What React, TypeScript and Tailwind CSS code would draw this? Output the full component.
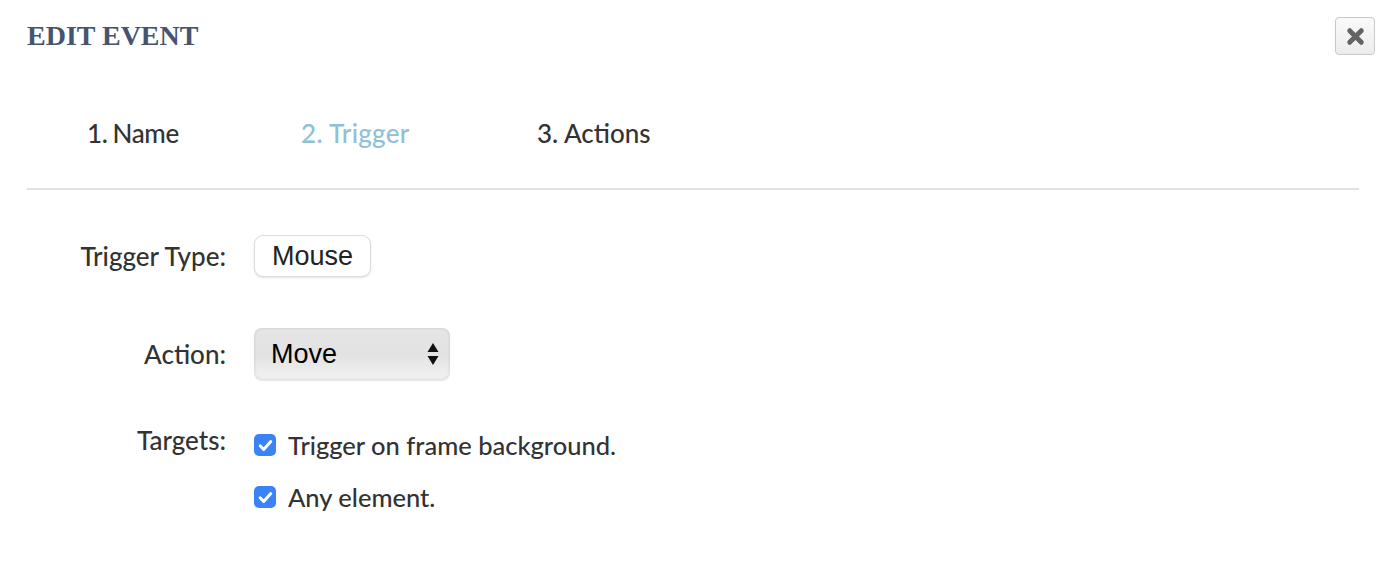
import React from "react";

const sans = { fontFamily: 'Lato, "Open Sans", sans-serif' };
const helv = { fontFamily: '"Liberation Sans", Arial, sans-serif' };

const Check = () => (
  <span className="w-[22px] h-[22px] rounded-[5px] bg-[#3b82f6] flex items-center justify-center shrink-0">
    <svg width="17" height="17" viewBox="0 0 16 16" fill="none">
      <path d="M3 8.3l3.3 3.4L13 4.3" stroke="#fff" strokeWidth="2.8" strokeLinecap="round" strokeLinejoin="round" />
    </svg>
  </span>
);

export default function App() {
  return (
    <div className="w-[1386px] h-[570px] bg-white relative text-[#333]" style={sans}>
      {/* header */}
      <div className="flex items-start justify-between pl-[27px] pr-[11px] pt-[17px]">
        <h1
          className="text-[28px] font-bold text-[#47546f] leading-none mt-[5px]"
          style={{ fontFamily: '"Liberation Serif", "Times New Roman", serif' }}
        >
          EDIT EVENT
        </h1>
        <button className="w-[40px] h-[38px] rounded-[4px] border border-[#c9c9c9] bg-gradient-to-b from-[#fafafa] to-[#ececec] flex items-center justify-center">
          <svg width="19" height="19" viewBox="0 0 18 18">
            <path d="M3.5 3.5l11 11M14.5 3.5l-11 11" stroke="#636363" strokeWidth="4.6" strokeLinecap="round" />
          </svg>
        </button>
      </div>

      {/* tabs */}
      <div className="mx-[27px] mt-[55px] border-b-2 border-[#e2e2e2] h-[80px] flex items-start pl-[60px] text-[26px] font-medium leading-none">
        <span className="w-[214px] mt-[10px] tracking-[-0.4px] [word-spacing:-1px]">1. Name</span>
        <span className="w-[236px] mt-[10px] text-[#8fc1d5] tracking-[0.3px]">2. Trigger</span>
        <span className="mt-[10px]">3. Actions</span>
      </div>

      {/* form */}
      <div className="pt-[45px] text-[26px] font-medium">
        <div className="flex items-center h-[42px]">
          <div className="w-[227px] text-right pr-[1px]">Trigger Type:</div>
          <div className="ml-[27px] h-[42px] w-[117px] rounded-[9px] border border-[#dcdcdc] bg-white shadow-[0_1px_2px_rgba(0,0,0,0.12)] flex items-center justify-center">
            <span className="text-[27px] font-normal text-[#222] leading-none" style={helv}>
              Mouse
            </span>
          </div>
        </div>

        <div className="flex items-center h-[52px] mt-[51px]">
          <div className="w-[227px] text-right pr-[1px]">Action:</div>
          <div className="ml-[27px] h-[52px] w-[196px] rounded-[8px] bg-gradient-to-b from-[#e6e6e6] via-[#e2e2e2] to-[#f2f2f2] shadow-[inset_0_0_3px_rgba(0,0,0,0.15),0_1px_1px_rgba(0,0,0,0.1)] flex items-center justify-between pl-[17px] pr-[11px]">
            <span className="text-[27px] font-normal text-black leading-none" style={helv}>
              Move
            </span>
            <svg width="12" height="26" viewBox="0 0 12 26">
              <path d="M6 2L11.5 11H0.5Z" fill="#111" />
              <path d="M6 24L11.5 15H0.5Z" fill="#111" />
            </svg>
          </div>
        </div>

        <div className="flex items-start mt-[47px]">
          <div className="w-[227px] text-right pr-[1px] leading-[26px]">Targets:</div>
          <div className="ml-[27px] flex flex-col gap-[26px] pt-[5px] text-[25.5px]">
            <label className="flex items-center gap-[12px] leading-[26px]">
              <Check />
              <span>Trigger on frame background.</span>
            </label>
            <label className="flex items-center gap-[12px] leading-[26px]">
              <Check />
              <span>Any element.</span>
            </label>
          </div>
        </div>
      </div>
    </div>
  );
}
